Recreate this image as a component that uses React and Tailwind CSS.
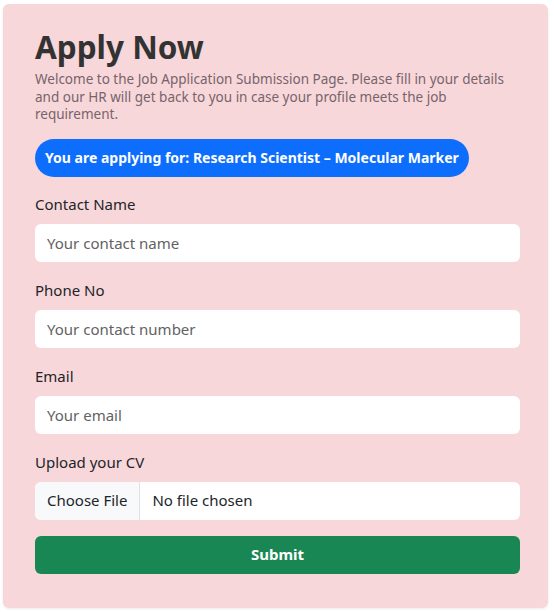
export default function App() {
  const font = { fontFamily: '"Noto Sans", "Open Sans", sans-serif' };
  return (
    <div className="min-h-[613px] bg-white pt-[4px] pl-[3px]" style={font}>
      <div className="w-[545px] rounded-md bg-[#f8d7da] pl-8 pr-[28px] pt-[24px] pb-[34px] shadow-[0_1px_3px_rgba(0,0,0,0.08)]">
        <h1 className="text-[31.5px] font-bold leading-[38px] text-[#333333]">Apply Now</h1>
        <p className="mt-[5px] text-[13.5px] leading-[17.5px] text-[#76646a]">
          Welcome to the Job Application Submission Page. Please fill in your details and our HR will get back to you in case your profile meets the job requirement.
        </p>
        <div className="mt-[15px] inline-flex h-[38px] items-center rounded-full bg-[#0d6efd] px-[10px] text-[14px] font-bold text-white">
          You are applying for: Research Scientist – Molecular Marker
        </div>
        <form className="mt-[15px] flex flex-col gap-[16px]" onSubmit={(e) => e.preventDefault()}>
          {[
            ["Contact Name", "Your contact name"],
            ["Phone No", "Your contact number"],
            ["Email", "Your email"],
          ].map(([l, p]) => (
            <div key={l} className="flex flex-col gap-[8px]">
              <label className="text-[15px] leading-[24px] text-[#212529]">{l}</label>
              <input
                placeholder={p}
                className="h-[38px] w-full rounded-md bg-white px-[12px] text-[15px] text-[#212529] outline-none placeholder:text-[#626262]"
              />
            </div>
          ))}
          <div className="flex flex-col gap-[8px]">
            <label className="text-[15px] leading-[24px] text-[#212529]">Upload your CV</label>
            <div className="flex h-[38px] w-full overflow-hidden rounded-md bg-white text-[15px] text-[#212529]">
              <span className="flex items-center border-r border-[#dee2e6] bg-[#f8f9fa] px-[12px]">Choose File</span>
              <span className="flex items-center px-[12px]">No file chosen</span>
            </div>
          </div>
          <button type="submit" className="h-[38px] w-full rounded-md bg-[#198754] text-[15px] font-bold text-white">
            Submit
          </button>
        </form>
      </div>
    </div>
  );
}
